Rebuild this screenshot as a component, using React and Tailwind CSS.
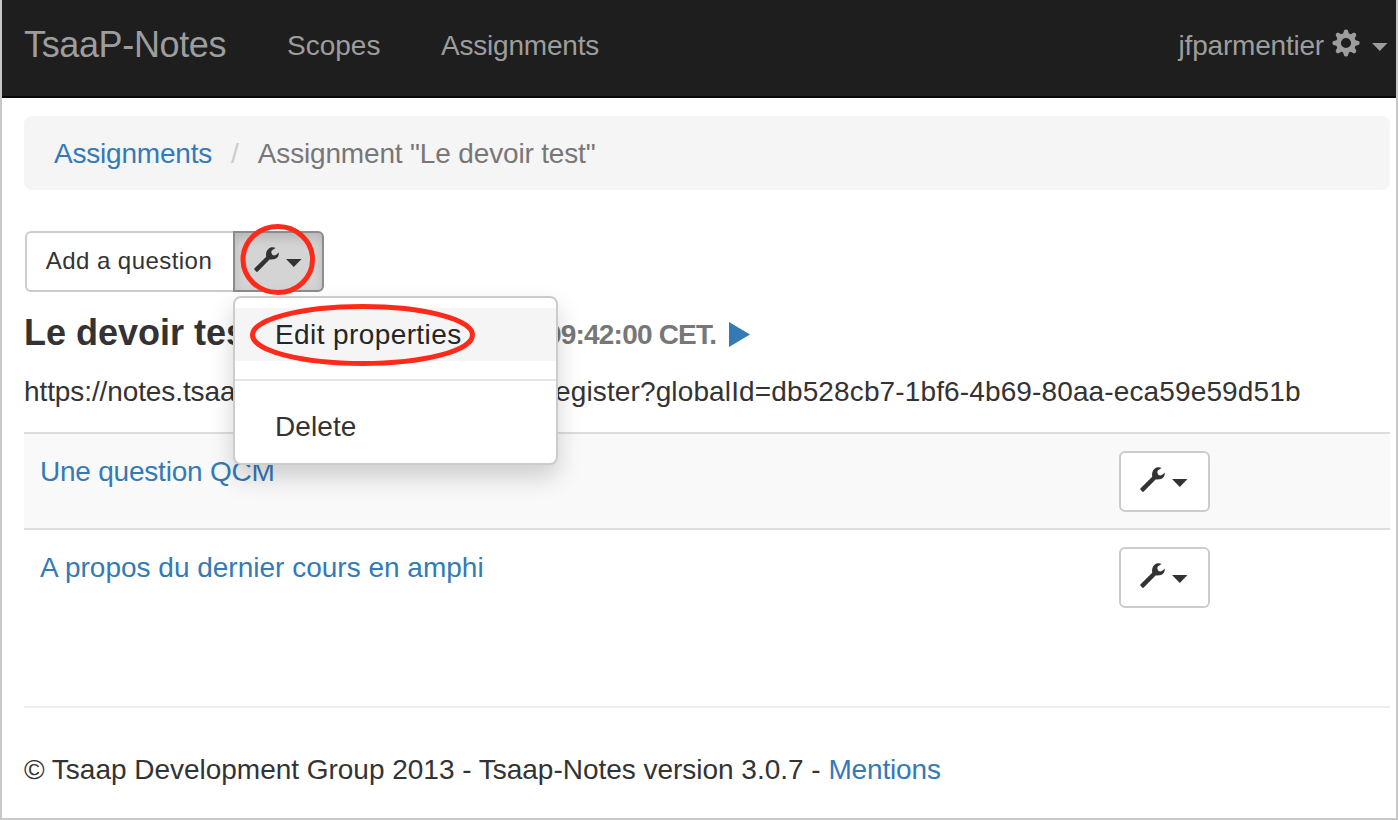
function Caret({ className }) {
  return (
    <svg className={className} width="16" height="8" viewBox="0 0 16 8" fill="currentColor">
      <path d="M0 0H15.500L7.750 8Z" />
    </svg>
  );
}

function Wrench({ className }) {
  return (
    <svg className={className} width="25" height="25" viewBox="0 0 25 25" fill="currentColor">
      <path d="M.6 21.2 12.2 9.8C11.7 6.6 12.3 3.6 14.6 1.8C16.6.2 19.4 0 21.5.9L17.8 3.6C17 5 17.4 7 18.6 8C20 8.7 21.6 8.4 22.6 7.6L24.8 5.6C25 8.200 24 10.400 22 11.6C20 12.7 17.600 12.500 15.600 12.400L3.800 24.500C3.200 25 2.600 25 2.100 24.500L.6 22.800C.1 22.200.1 21.700.6 21.200Z" />
    </svg>
  );
}

const TEETH = [0, 45, 90, 135, 180, 225, 270, 315];

function Gear({ className }) {
  return (
    <svg className={className} width="28" height="28" viewBox="-14 -14 28 28">
      <circle r="7.5" fill="none" stroke="currentColor" strokeWidth="4.800" />
      {TEETH.map((a) => (
        <path key={a} transform={`rotate(${a})`} d="M-3.100-9L-1.700-13Q0-14.200 1.700-13L3.100-9Z" fill="currentColor" />
      ))}
    </svg>
  );
}

function ToolButton() {
  return (
    <button className="flex h-[61px] w-[91px] rounded-[6px] border-2 border-[#ccc] bg-white pl-[19px] pt-[14px]">
      <Wrench />
      <Caret className="ml-[7px] mt-[12px]" />
    </button>
  );
}

function Row({ children, striped }) {
  return (
    <div className={"flex h-[96px] shrink-0 border-t-2 border-[#ddd] pl-[16px] pt-[17px] " + (striped ? "bg-[#f9f9f9]" : "bg-white")}>
      <a className="mt-[1px] w-[1079px] leading-[40px] text-[#337ab7]">{children}</a>
      <ToolButton />
    </div>
  );
}

export default function App() {
  return (
    <div className="relative flex h-[820px] w-[1398px] flex-col overflow-hidden border-x-2 border-b-2 border-[#c8c8c8] bg-white font-['Liberation_Sans',Arial,sans-serif] text-[28px] text-[#333]">
      <nav className="flex h-[98px] shrink-0 items-start border-b-2 border-[#080808] bg-[#1e1e1e] pl-[22px] text-[#9d9d9d]">
        <span className="w-[263px] whitespace-nowrap pt-[24px] text-[36px] leading-[42px] tracking-[-0.36px]">TsaaP-Notes</span>
        <span className="w-[154px] pt-[26px] leading-[40px]">Scopes</span>
        <span className="pt-[26px] leading-[40px] tracking-[-0.2px]">Assignments</span>
        <div className="ml-auto flex pr-[8px]">
          <span className="pt-[26px] leading-[40px] tracking-[-0.2px]">jfparmentier</span>
          <Gear className="ml-[8px] mt-[29px]" />
          <Caret className="ml-[12px] mt-[43px]" />
        </div>
      </nav>
      <main className="flex flex-col pl-[22px] pr-[6px]">
        <div className="mt-[18px] flex h-[74px] rounded-[8px] bg-[#f5f5f5] pl-[30px] pt-[18px] leading-[40px]">
          <a className="w-[158px] tracking-[-0.2px] text-[#337ab7]">Assignments</a>
          <span className="ml-[19px] mr-[19px] text-[#ccc]">/</span>
          <span className="tracking-[-0.16px] text-[#777]">Assignment "Le devoir test"</span>
        </div>
        <div className="ml-[1px] mt-[41px] flex h-[61px]">
          <button className="w-[208px] whitespace-nowrap rounded-l-[6px] border-2 border-r-0 border-[#ccc] bg-white pb-[2px] pr-[2px] text-[24px] tracking-[0.45px]">Add a question</button>
          <button className="flex w-[91px] rounded-r-[6px] border-2 border-[#8c8c8c] bg-[#d4d4d4] pl-[19px] pt-[14px] shadow-[inset_0_6px_10px_rgba(0,0,0,0.125)]">
            <Wrench />
            <Caret className="ml-[7px] mt-[12px]" />
          </button>
        </div>
        <div className="flex h-[80px] pt-[21px] font-bold leading-[40px]">
          <h1 className="w-[522px] text-[36px]">Le devoir test</h1>
          <span className="w-[170px] whitespace-nowrap pt-[2px] tracking-[-0.8px] text-[#777]">09:42:00 CET.</span>
          <svg className="ml-[13px] mt-[9px]" width="21" height="25" viewBox="0 0 21 25" fill="#337ab7"><path d="M0 0L21 12.500L0 25Z" /></svg>
        </div>
        <div className="flex h-[60px] leading-[40px]">
          <span className="w-[531px] tracking-[-0.1px]">https://notes.tsaap</span>
          <span className="tracking-[0.13px]">egister?globalId=db528cb7-1bf6-4b69-80aa-eca59e59d51b</span>
        </div>
        <Row striped><span className="tracking-[-0.22px]">Une question QCM</span></Row>
        <Row>A propos du dernier cours en amphi</Row>
        <footer className="mt-[82px] border-t-2 border-[#eee] pt-[42px] leading-[40px]">
          <span className="tracking-[-0.02px]">© Tsaap Development Group 2013 - Tsaap-Notes version 3.0.7 - </span>
          <a className="tracking-[-0.15px] text-[#337ab7]">Mentions</a>
        </footer>
      </main>
      <div className="absolute left-[231px] top-[296px] h-[169px] w-[325px] rounded-[8px] border-2 border-[#ccc] bg-white pt-[10px] shadow-[0_12px_24px_rgba(0,0,0,0.175)]">
        <div className="h-[53px] bg-[#f5f5f5] pl-[40px] leading-[54px] tracking-[0.4px] text-[#262626]">Edit properties</div>
        <div className="my-[18px] h-[2px] bg-[#e5e5e5]" />
        <div className="pl-[40px] pt-[1px] leading-[54px] tracking-[0.1px]">Delete</div>
      </div>
      <svg className="absolute left-[238px] top-[222px]" width="240" height="146" fill="none" stroke="#ff2a1a" strokeWidth="5">
        <ellipse cx="37.750" cy="37.500" rx="34.750" ry="33" />
        <ellipse cx="122.500" cy="113" rx="110" ry="28.500" />
      </svg>
    </div>
  );
}
